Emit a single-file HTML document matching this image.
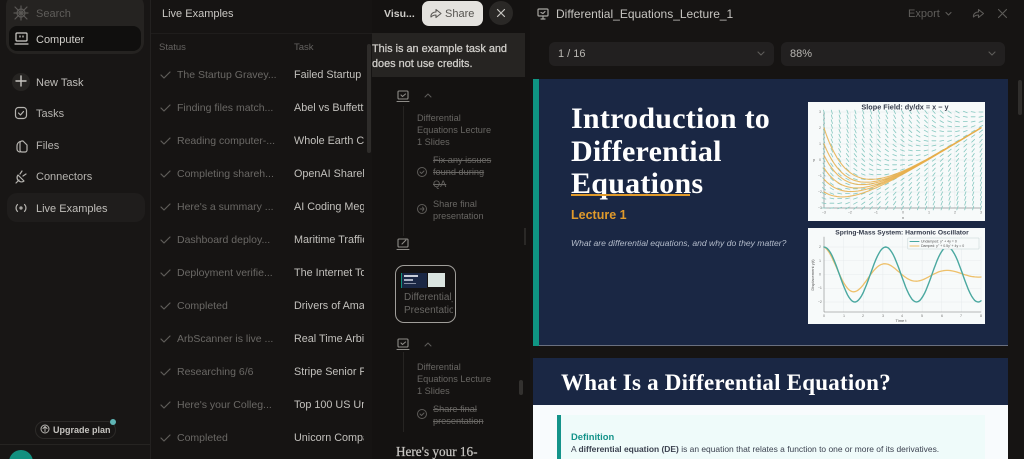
<!DOCTYPE html>
<html lang="en"><head><meta charset="utf-8"><title>Live Examples</title>
<style>
html,body{margin:0;padding:0;width:1024px;height:459px;overflow:hidden;background:#161413}
body{position:relative;font-family:"Liberation Sans",sans-serif;filter:blur(.3px)}
.a{position:absolute}
.t{position:absolute;white-space:nowrap;line-height:14px;font-size:11px;margin-top:1px}
.st{color:#6a6865;font-size:10.5px}.tk{color:#c2c0bc;width:70px;overflow:hidden;font-size:10.8px}
.tl{color:#686663;font-size:9.2px;line-height:12px}
.s{text-decoration:line-through}
svg{position:absolute;left:0;top:0}
</style></head><body>
<!-- panels -->
<div class="a" style="left:0;top:0;width:150px;height:459px;background:#181615;border-right:1px solid #232120"></div>
<div class="a" style="left:6px;top:-6px;width:138px;height:60px;background:#252321;border-radius:12px"></div>
<div class="a" style="left:9px;top:26px;width:132px;height:25px;background:#100f0e;border-radius:8px"></div>
<div class="a" style="left:7px;top:193px;width:138px;height:29px;background:#1f1d1c;border-radius:10px"></div>
<div class="a" style="left:12px;top:73px;width:18px;height:18px;background:#262422;border-radius:50%"></div>
<div class="a" style="left:0;top:444px;width:150px;height:1px;background:#262422"></div>
<div class="a" style="left:9px;top:450px;width:24px;height:24px;background:#12907f;border-radius:50%"></div>
<div class="a" style="left:35px;top:421px;width:79px;height:16px;border:1px solid #2c2a28;border-radius:9px"></div>
<div class="a" style="left:110px;top:419px;width:6px;height:6px;background:#5fb5b5;border-radius:50%"></div>
<div class="t" style="left:36px;top:6px;color:#5f5d5a">Search</div>
<div class="t" style="left:36px;top:32px;color:#d0cec9">Computer</div>
<div class="t" style="left:36px;top:75px;color:#c0beba">New Task</div>
<div class="t" style="left:36px;top:106px;color:#b5b3af">Tasks</div>
<div class="t" style="left:36px;top:138px;color:#b5b3af">Files</div>
<div class="t" style="left:36px;top:169px;color:#b5b3af">Connectors</div>
<div class="t" style="left:36px;top:201px;color:#c0beba">Live Examples</div>
<div class="t" style="left:53px;top:422px;color:#c6c4c0;font-size:9px;font-weight:bold">Upgrade plan</div>

<!-- table -->
<div class="a" style="left:151px;top:33px;width:221px;height:1px;background:#1f1d1c"></div>
<div class="t" style="left:162px;top:6px;color:#c9c7c3">Live Examples</div>
<div class="t" style="left:159px;top:40px;color:#646260;font-size:9.5px">Status</div>
<div class="t" style="left:294px;top:40px;color:#646260;font-size:9.5px">Task</div>
<div class="t st" style="left:177px;top:67px">The Startup Gravey...</div><div class="t tk" style="left:294px;top:67px">Failed Startup Graveyard</div>
<div class="t st" style="left:177px;top:100px">Finding files match...</div><div class="t tk" style="left:294px;top:100px">Abel vs Buffett</div>
<div class="t st" style="left:177px;top:133px">Reading computer-...</div><div class="t tk" style="left:294px;top:133px">Whole Earth Catalog</div>
<div class="t st" style="left:177px;top:166px">Completing shareh...</div><div class="t tk" style="left:294px;top:166px">OpenAI Shareholder</div>
<div class="t st" style="left:177px;top:199px">Here's a summary ...</div><div class="t tk" style="left:294px;top:199px">AI Coding Mega</div>
<div class="t st" style="left:177px;top:232px">Dashboard deploy...</div><div class="t tk" style="left:294px;top:232px">Maritime Traffic</div>
<div class="t st" style="left:177px;top:265px">Deployment verifie...</div><div class="t tk" style="left:294px;top:265px">The Internet Top</div>
<div class="t st" style="left:177px;top:298px">Completed</div><div class="t tk" style="left:294px;top:298px">Drivers of Amazon</div>
<div class="t st" style="left:177px;top:331px">ArbScanner is live ...</div><div class="t tk" style="left:294px;top:331px">Real Time Arbitrage</div>
<div class="t st" style="left:177px;top:364px">Researching 6/6</div><div class="t tk" style="left:294px;top:364px">Stripe Senior Product</div>
<div class="t st" style="left:177px;top:397px">Here's your Colleg...</div><div class="t tk" style="left:294px;top:397px">Top 100 US Universities</div>
<div class="t st" style="left:177px;top:430px">Completed</div><div class="t tk" style="left:294px;top:430px">Unicorn Company</div>
<div class="a" style="left:367px;top:44px;width:4px;height:109px;background:#2e2c2a;border-radius:2px"></div>

<!-- chat -->
<div class="a" style="left:372px;top:0;width:158px;height:459px;background:#141211"></div>
<div class="t" style="left:384px;top:6px;color:#cfcdc9;font-weight:bold;font-size:10.5px">Visu...</div>
<div class="a" style="left:422px;top:1px;width:61px;height:25px;background:#e4e2de;border-radius:7px"></div>
<div class="t" style="left:445px;top:6px;color:#55534f">Share</div>
<div class="a" style="left:489px;top:1px;width:24px;height:24px;background:#2a2826;border-radius:50%"></div>
<div class="a" style="left:372px;top:33px;width:153px;height:44px;background:#262422"></div>
<div class="t" style="left:372px;top:41px;color:#d2d0cc;font-size:10.9px;-webkit-text-stroke:.25px #d2d0cc">This is an example task and</div>
<div class="t" style="left:372px;top:56px;color:#d2d0cc;font-size:10.9px;-webkit-text-stroke:.25px #d2d0cc">does not use credits.</div>
<div class="a" style="left:403px;top:106px;width:1px;height:130px;background:#262422"></div>
<div class="a" style="left:403px;top:352px;width:1px;height:80px;background:#262422"></div>
<div class="t tl" style="left:417px;top:111px">Differential</div>
<div class="t tl" style="left:417px;top:123px">Equations Lecture</div>
<div class="t tl" style="left:417px;top:135px">1 Slides</div>
<div class="t tl s" style="left:433px;top:153px">Fix any issues</div>
<div class="t tl s" style="left:433px;top:165px">found during</div>
<div class="t tl s" style="left:433px;top:177px">QA</div>
<div class="t tl" style="left:433px;top:197px">Share final</div>
<div class="t tl" style="left:433px;top:209px">presentation</div>
<div class="a" style="left:395px;top:265px;width:59px;height:56px;border:1px solid #a09e9a;border-radius:9px"></div>
<div class="a" style="left:401px;top:273px;width:26px;height:15px;background:#1a2744;border-left:1px solid #12907f;box-sizing:border-box"></div>
<div class="a" style="left:404px;top:275px;width:14px;height:2px;background:#c8cdd8"></div>
<div class="a" style="left:404px;top:279px;width:9px;height:2px;background:#a8afc0"></div>
<div class="a" style="left:404px;top:283px;width:12px;height:1px;background:#8890a5"></div>
<div class="a" style="left:428px;top:273px;width:17px;height:14px;background:#d9e3df"></div>
<div class="t tl" style="left:404px;top:291px;width:49px;overflow:hidden;font-size:10px">Differential_</div>
<div class="t tl" style="left:404px;top:304px;width:49px;overflow:hidden;font-size:10px">Presentation</div>
<div class="t tl" style="left:417px;top:360px">Differential</div>
<div class="t tl" style="left:417px;top:372px">Equations Lecture</div>
<div class="t tl" style="left:417px;top:384px">1 Slides</div>
<div class="t tl s" style="left:433px;top:402px">Share final</div>
<div class="t tl s" style="left:433px;top:414px">presentation</div>
<div class="t" style="left:396px;top:444px;color:#c9c7c3;font:13.2px/14px 'Liberation Serif',serif;-webkit-text-stroke:.2px #c9c7c3">Here's your 16-</div>
<div class="a" style="left:519px;top:380px;width:4px;height:15px;background:#33312f;border-radius:2px"></div>
<div class="a" style="left:524px;top:228px;width:2px;height:17px;background:#2a2826"></div>

<!-- right panel -->
<div class="a" style="left:530px;top:0;width:494px;height:459px;background:#161413"></div>
<div class="t" style="left:556px;top:6px;color:#c6c4c0;font-size:12px">Differential_Equations_Lecture_1</div>
<div class="t" style="left:908px;top:6px;color:#5f5d5a">Export</div>
<div class="a" style="left:549px;top:42px;width:225px;height:24px;background:#222020;border-radius:6px"></div>
<div class="a" style="left:781px;top:42px;width:224px;height:24px;background:#222020;border-radius:6px"></div>
<div class="t" style="left:558px;top:46px;color:#b8b6b2">1 / 16</div>
<div class="t" style="left:790px;top:46px;color:#b8b6b2">88%</div>
<div class="a" style="left:1018px;top:80px;width:4px;height:35px;background:#302e2c;border-radius:2px"></div>

<!-- slide 1 -->
<div class="a" style="left:533px;top:79px;width:475px;height:267px;background:#1a2744;border-bottom:1px solid #6a7080;box-sizing:border-box"></div>
<div class="a" style="left:533px;top:79px;width:6px;height:267px;background:#0f9583"></div>
<div class="a" style="left:571px;top:103px;color:#fff;font:bold 30px/32.5px 'Liberation Serif',serif;letter-spacing:.25px;white-space:nowrap">Introduction to<br>Differential<br>Equations</div>
<div class="a" style="left:571px;top:194px;width:119px;height:2px;background:#e09a2b"></div>
<div class="t" style="left:571px;top:207px;color:#e09a2b;font-size:12.5px;font-weight:bold">Lecture 1</div>
<div class="t" style="left:571px;top:235px;color:#b4bccb;font-size:8.6px;font-style:italic">What are differential equations, and why do they matter?</div>
<div class="a" style="left:808px;top:102px;width:177px;height:119px;background:#f7fafa"></div>
<div class="a" style="left:808px;top:228px;width:177px;height:96px;background:#f7fafa"></div>

<!-- slide 2 -->
<div class="a" style="left:533px;top:358px;width:475px;height:101px;background:#f8fbfd"></div>
<div class="a" style="left:533px;top:358px;width:475px;height:47px;background:#1a2744"></div>
<div class="t" style="left:561px;top:370px;color:#fff;font:bold 23px/23px 'Liberation Serif',serif;letter-spacing:.22px">What Is a Differential Equation?</div>
<div class="a" style="left:557px;top:415px;width:428px;height:44px;background:#effbfa"></div>
<div class="a" style="left:557px;top:415px;width:4px;height:44px;background:#14938a"></div>
<div class="t" style="left:571px;top:429px;color:#14938a;font-size:9.4px;font-weight:bold">Definition</div>
<div class="t" style="left:571px;top:441px;color:#3c4250;font-size:8.45px">A <b>differential equation (DE)</b> is an equation that relates a function to one or more of its derivatives.</div>

<!-- icons and charts -->
<svg width="1024" height="459" viewBox="0 0 1024 459" fill="none" stroke-linecap="round" stroke-linejoin="round">
<g stroke="#5a5855" stroke-width="1.2"><circle cx="21" cy="13" r="4"/><path d="M15 7l12 12M27 7L15 19M21 6v14M14 13h14"/></g>
<g stroke="#d0cec9" stroke-width="1.2"><rect x="16" y="33" width="11" height="8" rx="1"/><path d="M15 44h13M20 36v1M23 36v1"/></g>
<g stroke="#c8c6c2" stroke-width="1.4"><path d="M21 76v10M16 81h10"/></g>
<g stroke="#b5b3af" stroke-width="1.2"><rect x="15.5" y="107.5" width="11" height="11" rx="3"/><path d="M18.500 113l2 2 3-3.500"/>
<path d="M20 143a2 2 0 0 1 2-2h1l4 4v5a2 2 0 0 1-2 2h-3a2 2 0 0 1-2-2zM20 141.500a5 5 0 0 0-3 4.500v3a3 3 0 0 0 3 3"/>
<path d="M16 183l3-3M22 171l-2 3M26 174l-3 2M18 175l6 6a4 4 0 0 1-5 0 4 4 0 0 1-1-6z"/>
<circle cx="21" cy="208" r="1"/><path d="M17.500 204.500a5 5 0 0 0 0 7M24.500 204.500a5 5 0 0 1 0 7"/></g>
<g stroke="#b5b3af" stroke-width="1"><circle cx="45" cy="429" r="4"/><path d="M45 431.500v-5M43 428.500l2-2 2 2"/></g>
<g stroke="#5e5c59" stroke-width="1.200">
<path d="M161 75l3 3 6-6M161 108l3 3 6-6M161 141l3 3 6-6M161 174l3 3 6-6M161 207l3 3 6-6M161 240l3 3 6-6M161 273l3 3 6-6M161 306l3 3 6-6M161 339l3 3 6-6M161 372l3 3 6-6M161 405l3 3 6-6M161 438l3 3 6-6"/></g>
<g stroke="#5a5855" stroke-width="1.100"><path d="M431 17c-.5-3 2-5 5-5V9.500l5 4-5 4V15c-2 0-3.500.5-5 2z"/></g>
<g stroke="#c8c6c2" stroke-width="1.200"><path d="M497.500 9.500l7 7M504.500 9.500l-7 7"/></g>
<g stroke="#8e8c88" stroke-width="1.100">
<rect x="398" y="91" width="10" height="8" rx="1"/><path d="M397 101.500h12M401 95l1.500 1.500 3-2.500"/>
<rect x="398" y="239" width="10" height="8" rx="1"/><path d="M397 249.500h12M402 244l4-4"/>
<rect x="398" y="339" width="10" height="8" rx="1"/><path d="M397 349.500h12M401 343l1.500 1.500 3-2.500"/></g>
<g stroke="#5e5c59" stroke-width="1"><path d="M425 97l3-3 3 3M425 346l3-3 3 3"/>
<circle cx="422" cy="172" r="4.500"/><path d="M420 172l1.500 1.500 2.500-2.500"/>
<circle cx="422" cy="209" r="4.500"/><path d="M420 209h4M422.500 207l1.500 2-1.500 2"/>
<circle cx="422" cy="414" r="4.500"/><path d="M420 414l1.500 1.500 2.500-2.500"/></g>
<g stroke="#a8a6a2" stroke-width="1.200"><rect x="538" y="9" width="10" height="7" rx="1"/><path d="M543 16v3M541 19h4M541 12.500l2 1 2-2"/></g>
<g stroke="#5e5c59" stroke-width="1.100"><path d="M946 12.500l2.500 2.500 2.500-2.500"/><path d="M973.500 17c-.5-3 2-5 5-5V9.500l5 4-5 4V15c-2 0-3.500.5-5 2zM998.500 9.500l8 8M1006.500 9.500l-8 8"/>
<path d="M758 52l3 3 3-3M989 52l3 3 3-3"/></g>
<g id="slope"></g>
<g id="spring"></g>
<g stroke="none" font-family="'Liberation Sans',sans-serif">
<text x="905" y="109.500" font-size="7.300" font-weight="bold" text-anchor="middle" fill="#333a4a">Slope Field:  dy/dx = x − y</text>
<text x="902" y="234.500" font-size="6.700" font-weight="bold" text-anchor="middle" fill="#333a4a">Spring-Mass System: Harmonic Oscillator</text>
<text x="903" y="219" font-size="4" text-anchor="middle" fill="#555">x</text>
<text x="901" y="322" font-size="4" text-anchor="middle" fill="#555">Time t</text>
<text x="814" y="161" font-size="4" text-anchor="middle" fill="#555">y</text>
<text transform="translate(814 275) rotate(-90)" font-size="4" fill="#555" text-anchor="middle">Displacement y(t)</text>
<g font-size="3.200" fill="#666" text-anchor="middle">
<text x="824" y="213.500">−3</text><text x="850" y="213.500">−2</text><text x="876" y="213.500">−1</text><text x="903" y="213.500">0</text><text x="929" y="213.500">1</text><text x="955" y="213.500">2</text><text x="981" y="213.500">3</text>
<text x="820" y="113">3</text><text x="820" y="129">2</text><text x="820" y="145">1</text><text x="820" y="161">0</text><text x="820" y="177">−1</text><text x="820" y="193">−2</text><text x="820" y="209">−3</text>
<text x="824" y="317">0</text><text x="844" y="317">1</text><text x="863" y="317">2</text><text x="883" y="317">3</text><text x="902" y="317">4</text><text x="922" y="317">5</text><text x="942" y="317">6</text><text x="961" y="317">7</text><text x="981" y="317">8</text>
<text x="820" y="248">2</text><text x="820" y="262">1</text><text x="820" y="275.500">0</text><text x="820" y="289">−1</text><text x="820" y="303">−2</text>
</g>
</g>
<g id="legend"></g>
<g stroke="none" font-family="'Liberation Sans',sans-serif" font-size="3.500" fill="#555">
<text x="921" y="242.500">Undamped: y'' + 4y = 0</text>
<text x="921" y="247">Damped: y'' + 0.5y' + 4y = 0</text>
</g>
</svg>
<script>
(function(){
var NS='http://www.w3.org/2000/svg';
function el(p,d,s,w,o){var e=document.createElementNS(NS,'path');e.setAttribute('d',d);e.setAttribute('stroke',s);e.setAttribute('stroke-width',w);if(o)e.setAttribute('opacity',o);e.setAttribute('fill','none');p.appendChild(e);}
var g=document.getElementById('slope');
var X=function(x){return 824+(x+3)*157/6},Y=function(y){return 160-y*16};
var d='',x,y,i;
for(i=-3;i<=3;i++){d+='M'+X(i)+' 112V208M824 '+Y(i)+'H981';}
el(g,d,'#dfe5e8',.4);
el(g,'M824 112V208H981','#666',.5);
d='';
for(i=0;i<=20;i++){x=-3+i*.3;for(var j=0;j<=20;j++){y=-3+j*.3;var a=Math.atan((x-y)*16/26.17),dx=Math.cos(a)*4,dy=Math.sin(a)*4;
d+='M'+(X(x)-dx/2).toFixed(1)+' '+(Y(y)+dy/2).toFixed(1)+'L'+(X(x)+dx/2).toFixed(1)+' '+(Y(y)-dy/2).toFixed(1);}}
el(g,d,'#86c8c0',.8);
[2,1,.3,-.5,-1.2,-2].forEach(function(y0){
 var p='';
 for(var t=-3;t<=3.01;t+=.1){var v=t-1+(y0+4)*Math.exp(-(t+3));p+=(p?'L':'M')+X(t).toFixed(1)+' '+Y(v).toFixed(1);}
 el(g,p,'#e8ae4a',1.1,'.85');
});
var h=document.getElementById('spring');
var Xs=function(t){return 824+t*157/8},Ys=function(v){return 274.5-v*13.75};
d='';for(i=0;i<=8;i++)d+='M'+Xs(i)+' 237V312';for(i=-2;i<=2;i++)d+='M824 '+Ys(i)+'H981';
el(h,d,'#e3e8ea',.4);
el(h,'M824 237V312H981','#777',.5);
var p1='',p2='';
for(var t=0;t<=8.001;t+=.08){p1+=(p1?'L':'M')+Xs(t).toFixed(1)+' '+Ys(2*Math.cos(2*t)).toFixed(1);
 p2+=(p2?'L':'M')+Xs(t).toFixed(1)+' '+Ys(2*Math.exp(-.3*t)*Math.cos(1.98*t)).toFixed(1);}
el(h,p2,'#eec06a',1.3);
el(h,p1,'#4aa8a0',1.4);
var L=document.getElementById('legend');
var l=document.createElementNS(NS,'rect');l.setAttribute('x','908');l.setAttribute('y','238');l.setAttribute('width','71');l.setAttribute('height','11');l.setAttribute('fill','#f7fafa');l.setAttribute('stroke','#b8c8c8');l.setAttribute('stroke-width','.4');L.appendChild(l);
el(L,'M910 241.500H919','#4aa8a0',1);el(L,'M910 246H919','#eec06a',1);
})();
</script>
</body></html>
